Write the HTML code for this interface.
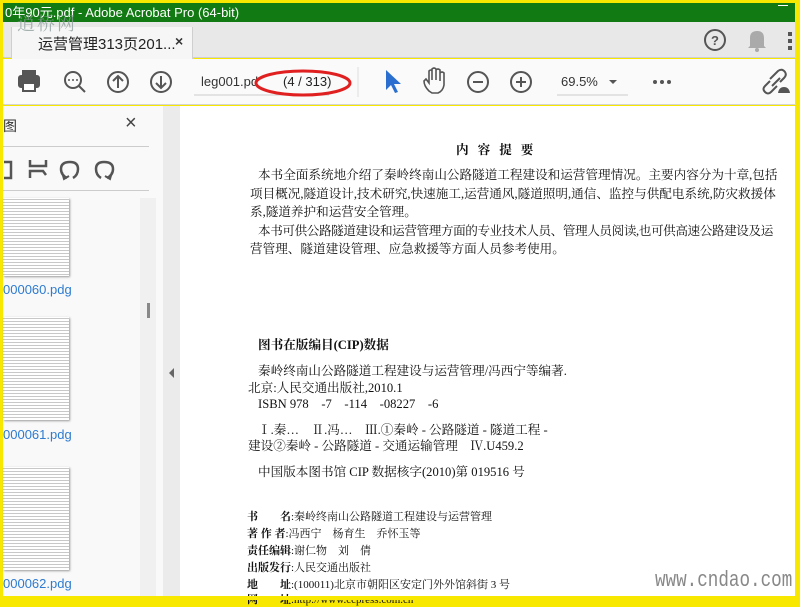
<!DOCTYPE html>
<html><head><meta charset="utf-8"><style>
*{margin:0;padding:0;box-sizing:border-box}
body{width:800px;height:600px;overflow:hidden;background:#f8e800;position:relative;font-family:"Liberation Sans","Noto Sans CJK SC",sans-serif}
.a{position:absolute;white-space:nowrap}
#title{left:3px;top:3px;width:792px;height:19px;background:#127a12;color:#fff;font-size:13px;line-height:19px;padding-left:2px}
#tabbar{left:3px;top:22px;width:792px;height:36px;background:#e8e8e8;border-bottom:1px solid #cfcfcf}
#tab{left:8px;top:5px;width:182px;height:32px;background:#f6f6f6;border-left:1px solid #cfcfcf;border-right:1px solid #cfcfcf}
#tool{left:3px;top:59px;width:792px;height:46px;background:#fafafa;border-bottom:1px solid #d4d4d4}
#side{left:3px;top:106px;width:160px;height:490px;background:#f9f9f9}
#gut{left:163px;top:106px;width:17px;height:490px;background:#ebebeb}
#page{left:180px;top:106px;width:615px;height:490px;background:#fff}
.d{font-family:"Liberation Serif","Noto Serif CJK SC",serif;color:#111;font-size:12.6px}
.th{background:#fff;box-shadow:1px 1px 2px #999;
background-image:repeating-linear-gradient(#fff 0 1px,#c8c8c8 1px 2px,#fff 2px 3px)}
.lb{color:#2e7bd0;font-size:13px}
.s{font-size:11px}
</style></head><body>
<div class="a" id="title">0年90元.pdf - Adobe Acrobat Pro (64-bit)</div>
<div class="a" style="right:12px;top:5px;width:10px;height:1px;background:#fff"></div>
<div class="a" id="tabbar"><div class="a" id="tab">
<div class="a" style="left:26px;top:6px;font-size:15px;color:#222">运营管理313页201...</div>
<div class="a" style="left:163px;top:6px;font-size:14px;color:#333;font-weight:bold">×</div></div>
<svg class="a" style="left:700px;top:6px" width="90" height="28">
<circle cx="12" cy="12" r="10" fill="none" stroke="#555" stroke-width="2"/><text x="8" y="17" font-size="13" font-weight="bold" fill="#555" font-family="Liberation Sans">?</text>
<path d="M47 18 L47 10 Q47 3 54 3 Q61 3 61 10 L61 18 L63 20 L45 20 Z" fill="#aaa"/><circle cx="54" cy="22" r="2" fill="#aaa"/>
<g fill="#555"><rect x="85" y="4" width="4" height="4"/><rect x="85" y="11" width="4" height="4"/><rect x="85" y="18" width="4" height="4"/></g>
</svg></div>
<div class="a" style="left:17px;top:10px;color:#8a9a9a;font-size:18px;font-family:'Noto Serif CJK SC',serif;opacity:.75;letter-spacing:2px">逍桥网</div>
<div class="a" id="tool">
<svg class="a" style="left:0;top:0" width="792" height="46" fill="none" stroke="#555" stroke-width="2">
<rect x="16" y="17" width="20" height="11" rx="2" fill="#555"/><rect x="20" y="12" width="12" height="5" fill="#555"/><rect x="20" y="24" width="12" height="8" fill="#fff"/>
<circle cx="70" cy="21" r="8"/><path d="M76 27 L82 33"/><g fill="#555" stroke="none"><circle cx="66" cy="21" r="1"/><circle cx="70" cy="21" r="1"/><circle cx="74" cy="21" r="1"/></g>
<circle cx="115" cy="23" r="10"/><path d="M115 29 V17 M110 22 L115 17 L120 22"/>
<circle cx="158" cy="23" r="10"/><path d="M158 17 V29 M153 24 L158 29 L163 24"/>
<path d="M191 36 H326" stroke="#ccc" stroke-width="1"/>
<path d="M355 8 V38" stroke="#ddd" stroke-width="1"/>
<path d="M383 11 L383 31 L388 26 L392 34 L395 33 L391 25 L398 25 Z" fill="#2a6fd0" stroke="none"/>
<path d="M426 32 Q421 27 421 22 L423 20 L426 24 V12 Q428 10 429 12 V21 V10 Q431 8 433 10 V21 V11 Q435 9 437 11 V22 V14 Q439 12 441 14 V26 Q440 32 435 34 H429 Z" stroke-width="1.6"/>
<circle cx="475" cy="23" r="10"/><path d="M470 23 H480"/>
<circle cx="518" cy="23" r="10"/><path d="M513 23 H523 M518 18 V28"/>
<path d="M554 36 H625" stroke="#ccc" stroke-width="1"/><path d="M606 21 L614 21 L610 25Z" fill="#555" stroke="none"/>
<g fill="#555" stroke="none"><circle cx="652" cy="23" r="2"/><circle cx="659" cy="23" r="2"/><circle cx="666" cy="23" r="2"/></g>
<path d="M767 20 L775 12 Q779 9 782 13 Q784 16 781 19 L777 23 M774 27 L768 33 Q765 36 762 33 Q759 30 762 27 L767 22 M769 27 L777 19"/>
<path d="M775 34 Q776 28 781 28 Q786 28 787 34 Z" fill="#555" stroke="none"/>
</svg>
<div class="a" style="left:198px;top:15px;font-size:13px;color:#333">leg001.pd</div>
<div class="a" style="left:280px;top:15px;font-size:13px;color:#222">(4 / 313)</div>
<svg class="a" style="left:248px;top:7px" width="105" height="34"><ellipse cx="52" cy="17" rx="47" ry="12" fill="none" stroke="#e02020" stroke-width="3"/></svg>
<div class="a" style="left:558px;top:15px;font-size:13px;color:#333">69.5%</div>
</div>
<div class="a" id="side">
<div class="a" style="left:0;top:10px;font-size:14px;color:#333">图</div>
<div class="a" style="left:122px;top:6px;font-size:20px;color:#444">×</div>
<div class="a" style="left:0;top:40px;width:146px;height:1px;background:#ccc"></div>
<svg class="a" style="left:0;top:50px" width="120" height="28" fill="none" stroke="#555" stroke-width="2.5">
<path d="M1 6 H8 V22 H1"/><path d="M27 4 V10 H43 V4 M27 22 V15 H40 L43 19"/>
<path d="M64 22 Q58 19 58 13 Q58 6 67 6 Q75 6 75 13 Q75 19 70 22"/><path d="M59 16 L61 23 L66 20" stroke-width="2"/>
<path d="M104 22 Q110 19 110 13 Q110 6 101 6 Q93 6 93 13 Q93 19 98 22"/><path d="M109 16 L107 23 L102 20" stroke-width="2"/>
</svg>
<div class="a" style="left:0;top:84px;width:146px;height:1px;background:#ccc"></div>
<div class="a" style="left:137px;top:92px;width:16px;height:400px;background:#f0f0f0"></div>
<div class="a" style="left:144px;top:197px;width:3px;height:15px;background:#888"></div>
<div class="a th" style="left:0;top:92px;width:66px;height:78px"></div>
<div class="a lb" style="left:0;top:176px">000060.pdg</div>
<div class="a th" style="left:0;top:211px;width:66px;height:103px"></div>
<div class="a lb" style="left:0;top:321px">000061.pdg</div>
<div class="a th" style="left:0;top:361px;width:66px;height:103px"></div>
<div class="a lb" style="left:0;top:470px">000062.pdg</div>
</div>
<div class="a" id="gut"><svg class="a" style="left:4px;top:262px" width="8" height="10"><path d="M7 0 L2 5 L7 10Z" fill="#666"/></svg></div>
<div class="a" id="page"></div>
<div class="d">
<div class="a" style="left:456px;top:139px;font-weight:bold;letter-spacing:9px">内容提要</div>
<div class="a" style="left:258px;top:164px">本书全面系统地介绍了秦岭终南山公路隧道工程建设和运营管理情况。主要内容分为十章,包括</div>
<div class="a" style="left:250px;top:183px">项目概况,隧道设计,技术研究,快速施工,运营通风,隧道照明,通信、监控与供配电系统,防灾救援体</div>
<div class="a" style="left:250px;top:201px">系,隧道养护和运营安全管理。</div>
<div class="a" style="left:258px;top:220px;letter-spacing:-0.4px">本书可供公路隧道建设和运营管理方面的专业技术人员、管理人员阅读,也可供高速公路建设及运</div>
<div class="a" style="left:250px;top:238px">营管理、隧道建设管理、应急救援等方面人员参考使用。</div>
<div class="a" style="left:258px;top:334px;font-weight:bold">图书在版编目(CIP)数据</div>
<div class="a" style="left:258px;top:360px">秦岭终南山公路隧道工程建设与运营管理/冯西宁等编著.</div>
<div class="a" style="left:248px;top:377px">北京:人民交通出版社,2010.1</div>
<div class="a" style="left:258px;top:393px">ISBN 978　-7　-114　-08227　-6</div>
<div class="a" style="left:258px;top:419px">Ⅰ.秦…　Ⅱ.冯…　Ⅲ.①秦岭 - 公路隧道 - 隧道工程 -</div>
<div class="a" style="left:248px;top:435px">建设②秦岭 - 公路隧道 - 交通运输管理　Ⅳ.U459.2</div>
<div class="a" style="left:258px;top:461px">中国版本图书馆 CIP 数据核字(2010)第 019516 号</div>
<div class="a s" style="left:247px;top:508px"><b>书　　名</b>:秦岭终南山公路隧道工程建设与运营管理</div>
<div class="a s" style="left:247px;top:525px"><b>著 作 者</b>:冯西宁　杨育生　乔怀玉等</div>
<div class="a s" style="left:247px;top:542px"><b>责任编辑</b>:谢仁物　刘　倩</div>
<div class="a s" style="left:247px;top:559px"><b>出版发行</b>:人民交通出版社</div>
<div class="a s" style="left:247px;top:576px"><b>地　　址</b>:(100011)北京市朝阳区安定门外外馆斜街 3 号</div>
<div class="a s" style="left:247px;top:591px"><b>网　　址</b>:http://www.ccpress.com.cn</div>
</div>
<div class="a" style="left:655px;top:568px;font-size:22px;color:#888;font-family:'Liberation Mono',monospace;transform:scaleX(.8);transform-origin:left">www.cndao.com</div>
<div class="a" style="left:0;top:596px;width:800px;height:4px;background:#f8e800"></div>
</body></html>
